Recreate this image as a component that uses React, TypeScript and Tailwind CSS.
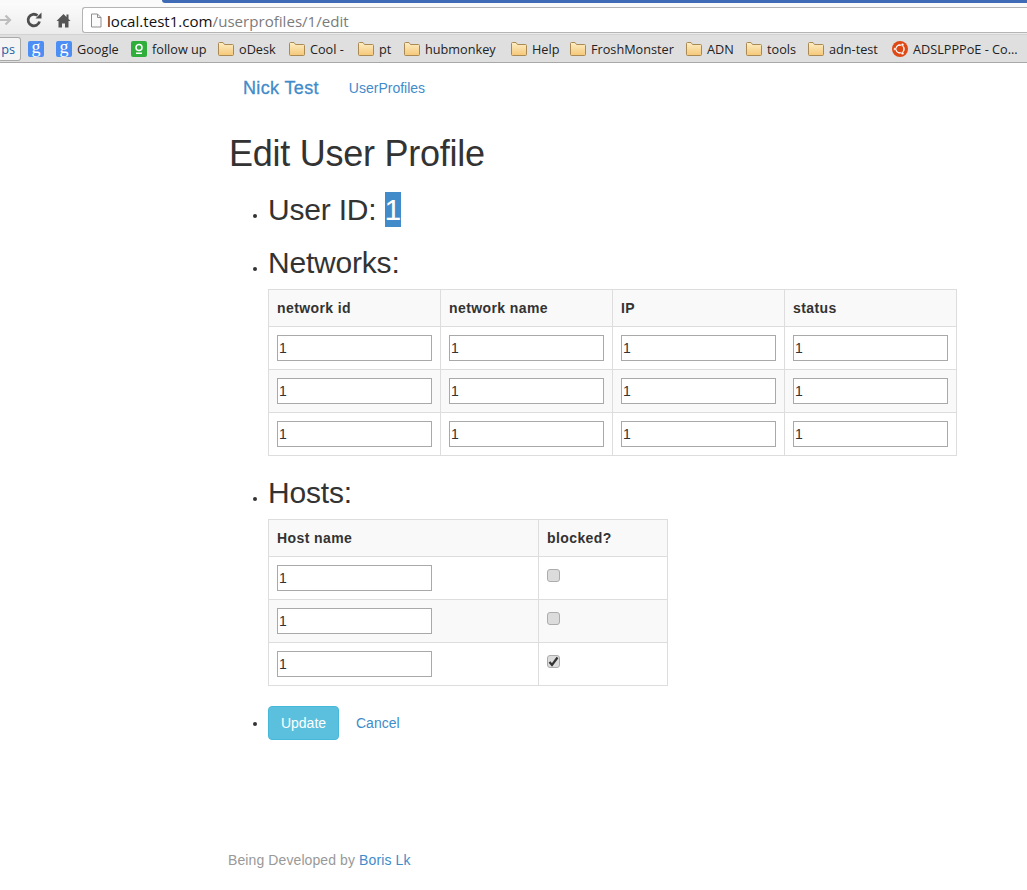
import React from 'react';

const Folder: React.FC = () => (
  <svg width="16" height="14" viewBox="0 0 16 14" className="shrink-0">
    <defs>
      <linearGradient id="folderFill" x1="0" y1="0" x2="0" y2="1">
        <stop offset="0" stopColor="#fdeec4" />
        <stop offset="1" stopColor="#f6c778" />
      </linearGradient>
    </defs>
    <path d="M0.5 3V1.5a1 1 0 0 1 1-1h3.5l1.5 2h8a1 1 0 0 1 1 1v9a1 1 0 0 1-1 1h-13a1 1 0 0 1-1-1z" fill="url(#folderFill)" stroke="#a98a55" />
  </svg>
);

const GoogleIcon: React.FC = () => (
  <span className="w-4 h-4 shrink-0 rounded-[2px] bg-[#4d8ef5] text-white text-[18px] leading-[13px] flex justify-center font-['Liberation_Serif',serif]">
    g
  </span>
);

const FollowIcon: React.FC = () => (
  <svg width="16" height="16" viewBox="0 0 16 16" className="shrink-0">
    <rect width="16" height="16" rx="2" fill="#2fae3c" />
    <circle cx="8" cy="6.5" r="3" fill="none" stroke="#fff" strokeWidth="1.5" />
    <rect x="5" y="11.5" width="6" height="1.5" fill="#fff" />
  </svg>
);

const UbuntuIcon: React.FC = () => (
  <svg width="16" height="16" viewBox="0 0 16 16" className="shrink-0">
    <circle cx="8" cy="8" r="8" fill="#dd4814" />
    <circle cx="8" cy="8" r="4" fill="none" stroke="#fff" strokeWidth="1.5" />
    <circle cx="3" cy="8" r="1.5" fill="#fff" stroke="#dd4814" strokeWidth="0.6" />
    <circle cx="10.5" cy="3.7" r="1.5" fill="#fff" stroke="#dd4814" strokeWidth="0.6" />
    <circle cx="10.5" cy="12.3" r="1.5" fill="#fff" stroke="#dd4814" strokeWidth="0.6" />
  </svg>
);

const Bookmark: React.FC<{ icon: React.ReactNode; label: string; className: string }> = ({ icon, label, className }) => (
  <div className={`flex items-center shrink-0 gap-[5px] whitespace-nowrap ${className}`}>
    {icon}
    <span>{label}</span>
  </div>
);

const BrowserChrome: React.FC = () => (
  <div className="h-[63px] flex flex-col bg-[#f1f1f1] font-['Open_Sans',sans-serif] text-[#222]">
    <div className="h-[3px] flex bg-[#fafafa]">
      <div className="w-[162px]" />
      <div className="flex-1 bg-[#3f6ab5] rounded-bl-[3px]" />
    </div>
    <div className="h-[31px] flex items-start pt-[4px] bg-gradient-to-b from-[#fbfbfb] to-[#ececec]">
      <div className="w-[82px] h-[26px] flex items-center shrink-0">
        <svg width="13" height="12" viewBox="0 0 13 12" className="ml-[-1px]">
          <path d="M0 6h11M6.500 1.500 11 6l-4.500 4.500" fill="none" stroke="#bdbdbd" strokeWidth="2.200" />
        </svg>
        <svg width="16" height="16" viewBox="0 0 16 16" className="ml-[14px]">
          <path d="M13.500 9.500A5.800 5.800 0 1 1 11.500 3.500" fill="none" stroke="#4d4d4d" strokeWidth="2.800" />
          <path d="M9.500 6.500 15.500 6.500 15.500 0.500z" fill="#4d4d4d" />
        </svg>
        <svg width="15" height="15" viewBox="0 0 15 15" className="ml-[14px]">
          <path d="M7.500 1 0.500 8h2v6.500h3.500v-4h3v4h3.500V8h2l-2-2V1.500h-2v2.500z" fill="#555" />
        </svg>
      </div>
      <div className="flex-1 h-[26px] bg-white border border-r-0 border-[#b4b4b4] rounded-l-[3px] flex items-center pl-[6px] pt-[1px] text-[15.100px]">
        <svg width="14" height="15" viewBox="0 0 14 15" className="mr-[4px] shrink-0">
          <path d="M2.500 1h6l3.500 3.500V14h-9.500z" fill="#fbfbfb" stroke="#8f8f8f" />
          <path d="M8.500 1v3.500H12" fill="none" stroke="#8f8f8f" />
        </svg>
        <span className="text-[#111] whitespace-nowrap">local.test1.com</span>
        <span className="text-[#7b7b7b] whitespace-nowrap">/userprofiles/1/edit</span>
      </div>
    </div>
    <div className="h-[29px] flex items-center bg-[#dfdfdf] border-t border-[#d2d2d2] border-b border-b-[#a8a8a8] text-[12.700px] overflow-hidden">
      <div className="w-[21px] h-[24px] shrink-0 flex items-center justify-end pr-[5px] bg-[#f4f4f4] border border-l-0 border-[#a9a9a9] rounded-r-[3px] text-[#1c5fa8] overflow-hidden">
        ps
      </div>
      <div className="w-[7px] shrink-0" />
      <div className="w-[16px] shrink-0"><GoogleIcon /></div>
      <div className="w-[12px] shrink-0" />
      <Bookmark icon={<GoogleIcon />} label="Google" className="w-[63px]" />
      <div className="w-[12px] shrink-0" />
      <Bookmark icon={<FollowIcon />} label="follow up" className="w-[75px]" />
      <div className="w-[12px] shrink-0" />
      <Bookmark icon={<Folder />} label="oDesk" className="w-[58px]" />
      <div className="w-[13px] shrink-0" />
      <Bookmark icon={<Folder />} label="Cool -" className="w-[57px]" />
      <div className="w-[12px] shrink-0" />
      <Bookmark icon={<Folder />} label="pt" className="w-[34px]" />
      <div className="w-[12px] shrink-0" />
      <Bookmark icon={<Folder />} label="hubmonkey" className="w-[94px]" />
      <div className="w-[13px] shrink-0" />
      <Bookmark icon={<Folder />} label="Help" className="w-[46px]" />
      <div className="w-[13px] shrink-0" />
      <Bookmark icon={<Folder />} label="FroshMonster" className="w-[103px]" />
      <div className="w-[13px] shrink-0" />
      <Bookmark icon={<Folder />} label="ADN" className="w-[47px]" />
      <div className="w-[13px] shrink-0" />
      <Bookmark icon={<Folder />} label="tools" className="w-[49px]" />
      <div className="w-[13px] shrink-0" />
      <Bookmark icon={<Folder />} label="adn-test" className="w-[72px]" />
      <div className="w-[12px] shrink-0" />
      <Bookmark icon={<UbuntuIcon />} label="ADSLPPPoE - Co..." className="w-[135px]" />
    </div>
  </div>
);

const TextCell: React.FC = () => (
  <input
    type="text"
    defaultValue="1"
    className="block w-[155px] h-[26px] px-[1px] bg-white border border-[#a9a9a9] text-[14px] text-[#333] outline-none"
  />
);

const Check: React.FC<{ checked?: boolean }> = ({ checked }) => (
  <div className="relative w-[13px] h-[13px] mt-[4px]">
    <input
      type="checkbox"
      defaultChecked={checked}
      className="block appearance-none w-[13px] h-[13px] rounded-[3px] border border-[#acacac] bg-[#dcdcdc]"
    />
    {checked && (
      <svg width="11" height="11" viewBox="0 0 11 11" className="absolute left-[1px] top-[1px] pointer-events-none">
        <path d="M1.500 6 4 9 9.500 1.500" fill="none" stroke="#333" strokeWidth="2.200" />
      </svg>
    )}
  </div>
);

const headingClass = 'mt-5 mb-2.5 text-[30px] leading-[33px] font-normal tracking-[-0.2px]';
const thClass = 'border border-[#ddd] p-2 text-left text-[14px] leading-5 font-bold tracking-[0.4px]';
const tdClass = 'border border-[#ddd] p-2 align-top';

const networkColumns = ['network id', 'network name', 'IP', 'status'];

const App: React.FC = () => {
  return (
    <div className="min-h-[890px] overflow-hidden bg-white font-['Liberation_Sans',Arial,sans-serif] text-[14px] leading-5 text-[#333]">
      <BrowserChrome />
      <div className="ml-[228px] w-[730px]">
        <nav className="h-[50px] flex items-center pl-[15px]">
          <a className="text-[18px] tracking-[0.35px] text-[#428bca] [-webkit-text-stroke:0.3px_#428bca]">Nick Test</a>
          <a className="ml-[30px] text-[#428bca]">UserProfiles</a>
        </nav>

        <h1 className="mt-[21px] mb-[9px] pl-[1px] text-[36px] leading-[39px] font-normal tracking-[-0.25px]">Edit User Profile</h1>

        <ul className="list-disc pl-10">
          <li>
            <h3 className={headingClass}>
              User ID: <span className="bg-[#428bca] py-[1px] text-white">1</span>
            </h3>
          </li>
          <li>
            <h3 className={headingClass}>Networks:</h3>
            <table className="table-fixed border-collapse w-[689px] mb-5">
              <thead>
                <tr className="bg-[#f9f9f9]">
                  {networkColumns.map((col) => (
                    <th key={col} className={thClass}>{col}</th>
                  ))}
                </tr>
              </thead>
              <tbody>
                {[0, 1, 2].map((row) => (
                  <tr key={row} className={row === 1 ? 'bg-[#f9f9f9]' : ''}>
                    {networkColumns.map((col) => (
                      <td key={col} className={tdClass}><TextCell /></td>
                    ))}
                  </tr>
                ))}
              </tbody>
            </table>
          </li>
          <li>
            <h3 className={headingClass}>Hosts:</h3>
            <table className="table-fixed border-collapse w-[399px] mb-5">
              <colgroup>
                <col className="w-[270px]" />
                <col className="w-[129px]" />
              </colgroup>
              <thead>
                <tr className="bg-[#f9f9f9]">
                  <th className={thClass}>Host name</th>
                  <th className={thClass}>blocked?</th>
                </tr>
              </thead>
              <tbody>
                {[false, false, true].map((checked, i) => (
                  <tr key={i} className={i === 1 ? 'bg-[#f9f9f9]' : ''}>
                    <td className={tdClass}><TextCell /></td>
                    <td className={tdClass}><Check checked={checked} /></td>
                  </tr>
                ))}
              </tbody>
            </table>
          </li>
          <li>
            <div className="flex items-center">
              <button className="h-[34px] w-[71px] rounded-[4px] bg-[#5bc0de] border border-[#46b8da] text-white text-[14px]">
                Update
              </button>
              <a className="ml-[17px] text-[#428bca]">Cancel</a>
            </div>
          </li>
        </ul>

        <footer className="mt-[110px] text-[#999] tracking-[0.1px]">
          Being Developed by <a className="text-[#428bca]">Boris Lk</a>
        </footer>
      </div>
    </div>
  );
};

export default App;
